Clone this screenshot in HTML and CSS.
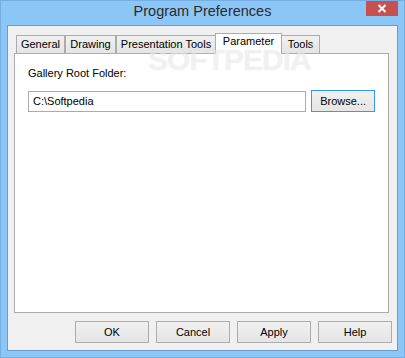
FILE: index.html
```html
<!DOCTYPE html>
<html lang="en">
<head>
    <meta charset="UTF-8">
    <title>Program Preferences</title>
    <link rel="stylesheet" href="styles.css">
</head>
<body>

    <div class="window">
        <div class="titlebar">
            <span class="title">Program Preferences</span>
            <div class="close">
                <svg width="10" height="9" viewBox="0 0 10 9">
                    <path d="M1.5 1 L8.5 8 M8.5 1 L1.5 8" stroke="#fff" stroke-width="2" fill="none"/>
                </svg>
            </div>
        </div>

        <div class="client">
            <!-- Tabs -->
            <div class="tabs">
                <div class="tab tab-general">General</div>
                <div class="tab tab-drawing">Drawing</div>
                <div class="tab tab-presentation">Presentation Tools</div>
                <div class="tab tab-parameter active">Parameter</div>
                <div class="tab tab-tools">Tools</div>
            </div>

            <div class="panel">
                <label class="field-label" for="galleryRoot">Gallery Root Folder:</label>
                <div class="field-row">
                    <input type="text" id="galleryRoot" class="text-input" value="C:\Softpedia">
                    <button class="btn btn-browse">Browse...</button>
                </div>
            </div>

            <div class="actions">
                <button class="btn">OK</button>
                <button class="btn">Cancel</button>
                <button class="btn">Apply</button>
                <button class="btn">Help</button>
            </div>
        </div>

        <div class="watermark">SOFTPEDIA<span class="reg">®</span></div>
    </div>

</body>
</html>
```

FILE: styles.css
```css
* {
    box-sizing: border-box;
}
body {
    margin: 0;
    font-family: "Liberation Sans", Arial, sans-serif;
    font-size: 11px;
    color: #000;
}
.window {
    position: relative;
    width: 405px;
    height: 358px;
    background-color: #8cc6f7;
    border: 1px solid #74aee3;
    padding: 0 6px 6px 6px;
    overflow: hidden;
}
.titlebar {
    height: 24px;
    text-align: center;
}
.title {
    font-size: 14.5px;
    line-height: 20px;
    color: #2b2b2b;
}
.close {
    position: absolute;
    top: -1px;
    right: 6px;
    width: 32px;
    height: 16px;
    background-color: #c75050;
    display: flex;
    align-items: center;
    justify-content: center;
}
.client {
    height: 326px;
    background-color: #f0f0f0;
    border: 1px solid #6d9ccb;
}

/* tabs */
.tabs {
    display: flex;
    align-items: flex-end;
    height: 18px;
    margin-top: 9px;
    margin-left: 8px;
}
.tab {
    height: 18px;
    border: 1px solid #acacac;
    border-bottom: none;
    background: linear-gradient(#f0f0f0, #e5e5e5);
    text-align: center;
    line-height: 17px;
    white-space: nowrap;
}
.tab-general { width: 49px; }
.tab-drawing { width: 51px; }
.tab-presentation { width: 100px; }
.tab-parameter { width: 67px; margin-left: -1px; }
.tab-tools { width: 39px; margin-left: -1px; }
.tab.active {
    position: relative;
    z-index: 1;
    height: 21px;
    margin-bottom: -1px;
    background: #fff;
    line-height: 15px;
}

.panel {
    height: 260px;
    width: 375px;
    margin-left: 6px;
    background-color: #fff;
    border: 1px solid #acacac;
    padding: 12px 13px;
}
.field-label {
    display: block;
    line-height: 14px;
}
.field-row {
    display: flex;
    align-items: center;
    margin-top: 10px;
}
.text-input {
    width: 279px;
    height: 21px;
    border: 1px solid #ababab;
    padding: 0 4px;
    font-family: inherit;
    font-size: 11px;
    margin: 0;
}
.btn {
    height: 22px;
    width: 74px;
    border: 1px solid #acacac;
    background: linear-gradient(#f0f0f0, #e5e5e5);
    font-family: inherit;
    font-size: 11px;
    color: #000;
    padding: 0;
    margin: 0;
}
.btn-browse {
    width: 64px;
    margin-left: 5px;
    border-color: #3399ff;
}
.actions {
    display: flex;
    justify-content: flex-end;
    gap: 7px;
    margin-top: 8px;
    padding-right: 5px;
}

.watermark {
    position: absolute;
    left: 147px;
    top: 42px;
    font-size: 30px;
    font-weight: bold;
    letter-spacing: -1px;
    color: rgba(255, 255, 255, 0.55);
    text-shadow: 0 0 1px rgba(0, 0, 0, 0.12);
    pointer-events: none;
    z-index: 2;
}
.reg {
    font-size: 8px;
    vertical-align: top;
    letter-spacing: 0;
}
```
